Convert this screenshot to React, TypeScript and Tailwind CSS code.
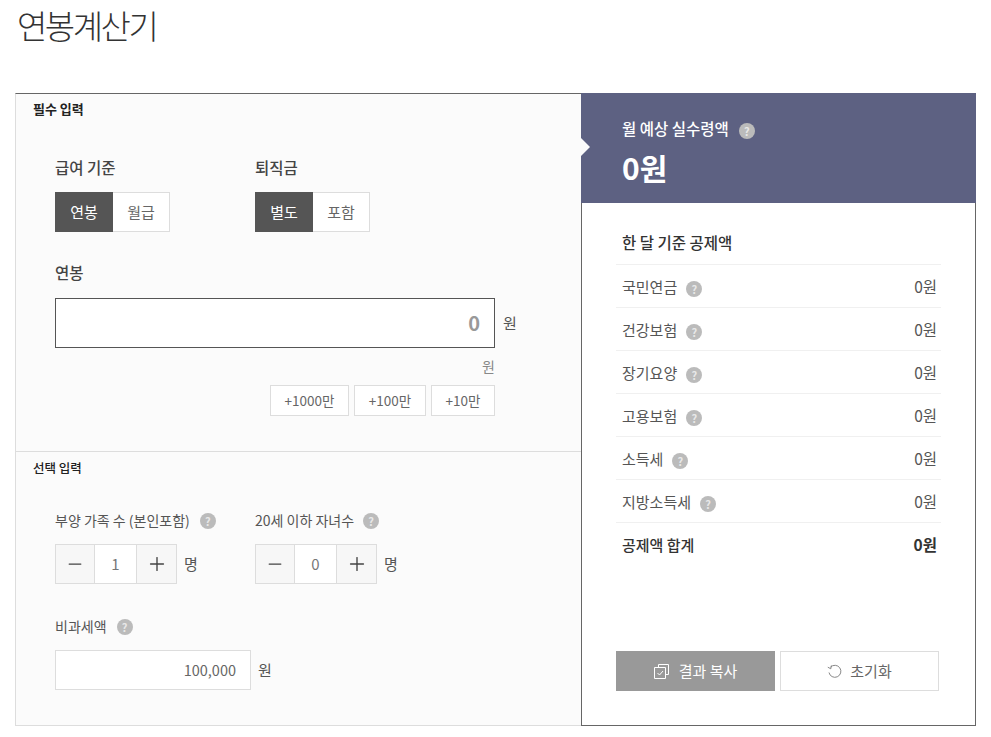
import { ReactNode } from "react";
import { Minus, Plus } from "lucide-react";

const Help = ({ className = "" }: { className?: string }) => (
  <span
    className={`inline-flex h-4 w-4 shrink-0 items-center justify-center rounded-full bg-[#bbbbbb] text-[11px] leading-none font-bold text-[#e8e8e8] ${className}`}
  >
    ?
  </span>
);

const Toggle = ({ on, off }: { on: string; off: string }) => (
  <div className="mt-[14px] flex h-10 w-[115px] text-[15px]">
    <div className="flex w-[58px] items-center justify-center bg-[#555555] text-white">{on}</div>
    <div className="flex flex-1 items-center justify-center border border-l-0 border-[#dddddd] bg-white text-[#666666]">
      {off}
    </div>
  </div>
);

const Stepper = ({ value }: { value: string }) => (
  <div className="mt-[13px] flex items-center">
    <div className="flex h-10 w-[122px] border border-[#dddddd] bg-white">
      <div className="flex w-[38px] items-center justify-center bg-[#f7f7f7] text-[#444444]">
        <Minus size={20} strokeWidth={1.5} />
      </div>
      <div className="flex flex-1 items-center justify-center border-x border-[#dddddd] text-[15px] text-[#777777]">
        {value}
      </div>
      <div className="flex w-[39px] items-center justify-center bg-[#f7f7f7] text-[#444444]">
        <Plus size={22} strokeWidth={1.5} />
      </div>
    </div>
    <span className="ml-[7px] text-[15px] text-[#555555]">명</span>
  </div>
);

const AddButton = ({ width, children }: { width: string; children: ReactNode }) => (
  <div className={`flex h-[31px] items-center justify-center border border-[#dddddd] bg-white text-[13.5px] text-[#666666] ${width}`}>
    {children}
  </div>
);

const rows = ["국민연금", "건강보험", "장기요양", "고용보험", "소득세", "지방소득세"];

export default function App() {
  return (
    <div
      className="h-[737px] w-[991px] overflow-hidden bg-white px-[15px] text-[#444444]"
      style={{ fontFamily: '"Noto Sans CJK KR", "Noto Sans", sans-serif' }}
    >
      <h1 className="h-[93px] pl-[2px] text-[33px] leading-[50px] font-light tracking-[-2.5px] text-[#333333]">연봉계산기</h1>

      <div className="flex h-[633px] w-[961px]">
        {/* 입력 영역 */}
        <div className="flex w-[566px] flex-col border-t border-b border-l border-t-[#666666] border-b-[#dddddd] border-l-[#dddddd] bg-[#fbfbfb]">
          <section className="h-[358px] border-b border-[#dddddd]">
            <h2 className="pt-[5px] pl-[17px] text-[13px] leading-5 font-bold text-[#222222]">필수 입력</h2>
            <div className="mt-[37px] flex pl-[39px]">
              <div className="w-[200px]">
                <div className="text-[15.5px] leading-[22px] font-medium">급여 기준</div>
                <Toggle on="연봉" off="월급" />
              </div>
              <div>
                <div className="text-[15.5px] leading-[22px] font-medium">퇴직금</div>
                <Toggle on="별도" off="포함" />
              </div>
            </div>
            <div className="mt-[29px] pl-[39px] text-[15.5px] leading-[22px] font-medium">연봉</div>
            <div className="mt-[15px] flex items-center pl-[39px]">
              <div className="flex h-[50px] w-[440px] items-center justify-end border border-[#555555] bg-white pr-[14px] text-xl font-bold text-[#999999]">
                0
              </div>
              <span className="ml-2 text-[15px] text-[#555555]">원</span>
            </div>
            <div className="mt-[8px] w-[479px] text-right text-sm leading-5 text-[#888888]">원</div>
            <div className="mt-[9px] flex w-[479px] justify-end gap-[5px]">
              <AddButton width="w-[79px]">+1000만</AddButton>
              <AddButton width="w-[72px]">+100만</AddButton>
              <AddButton width="w-[64px]">+10만</AddButton>
            </div>
          </section>

          <section className="flex-1">
            <h2 className="pt-[6px] pl-[17px] text-[12.5px] leading-5 font-medium text-[#222222]">선택 입력</h2>
            <div className="mt-[31px] flex pl-[39px]">
              <div className="w-[200px]">
                <div className="flex h-[22px] items-center text-sm text-[#555555]">
                  부양 가족 수 (본인포함)
                  <Help className="ml-[10px] translate-y-px" />
                </div>
                <Stepper value="1" />
              </div>
              <div>
                <div className="flex h-[22px] items-center text-sm text-[#555555]">
                  20세 이하 자녀수
                  <Help className="ml-[9px] translate-y-px" />
                </div>
                <Stepper value="0" />
              </div>
            </div>
            <div className="mt-[31px] flex h-[22px] items-center pl-[39px] text-sm text-[#555555]">
              비과세액
              <Help className="ml-[10px] translate-y-px" />
            </div>
            <div className="mt-[13px] flex items-center pl-[39px]">
              <div className="flex h-10 w-[196px] items-center justify-end border border-[#dddddd] bg-white pr-[14px] text-[14.5px] text-[#666666]">
                100,000
              </div>
              <span className="ml-[7px] text-[15px] text-[#555555]">원</span>
            </div>
          </section>
        </div>

        {/* 결과 영역 */}
        <div className="relative flex w-[395px] flex-col border-r border-b border-l border-[#666666] bg-white">
          <div className="relative -mx-px h-[110px] bg-[#5d6182] pt-[25px] pl-[41px] text-white">
            <div className="flex h-[22px] items-center text-[15.5px] font-medium">
              월 예상 실수령액
              <Help className="ml-[10px] translate-y-[2px]" />
            </div>
            <div className="mt-[6px] text-[30px] leading-[42px] font-bold">0원</div>
            <div className="absolute top-[45px] left-0 border-y-[9px] border-l-[9px] border-y-transparent border-l-[#fbfbfb]" />
          </div>

          <div className="flex-1 px-[34px]">
            <div className="flex h-[62px] items-end border-b border-[#f0f0f0] pb-[10px] pl-[6px] text-[15.5px] font-medium text-[#333333]">
              한 달 기준 공제액
            </div>
            {rows.map((name) => (
              <div key={name} className="flex h-[43px] items-center justify-between border-b border-[#f0f0f0] pt-[2px] pr-[4px] pl-[6px] text-[15px] text-[#555555]">
                <span className="flex items-center">
                  {name}
                  <Help className="ml-[9px] translate-y-[2px]" />
                </span>
                <span className="text-[15.5px]">0원</span>
              </div>
            ))}
            <div className="flex h-[43px] items-center justify-between pt-px pr-[4px] pl-[6px] text-[15px] font-medium text-[#333333]">
              <span>공제액 합계</span>
              <span className="text-[15.5px] font-bold">0원</span>
            </div>
            <div className="mt-[85px] flex gap-[5px]">
              <div className="flex h-10 w-[159px] items-center justify-center gap-[10px] bg-[#999999] text-[15px] text-white">
                <svg width="15" height="15" viewBox="0 0 15 15" fill="none" stroke="currentColor" strokeWidth="1">
                  <path d="M4.5 3.5v-3h10v10h-3" />
                  <path d="M.5 3.5h11v11H.5z" />
                  <path d="M3.5 9l2 2 3.5-4" />
                </svg>
                결과 복사
              </div>
              <div className="flex h-10 w-[159px] items-center justify-center gap-[8px] border border-[#dddddd] bg-white text-[15px] text-[#666666]">
                <svg width="15" height="14" viewBox="0 0 15 14" fill="none" stroke="#888888" strokeWidth="1">
                  <path d="M3.5 3.2A6 6 0 1 1 2 8.5" />
                  <path d="M.8 3.2l3 1.6.6-3.4" />
                </svg>
                초기화
              </div>
            </div>
          </div>
        </div>
      </div>
    </div>
  );
}
